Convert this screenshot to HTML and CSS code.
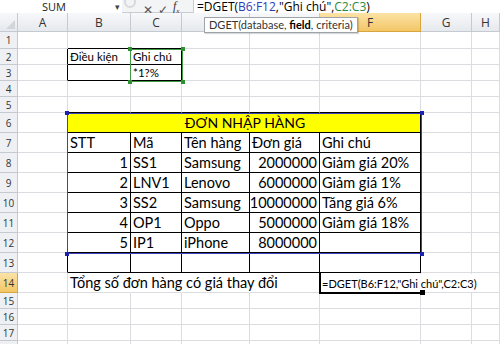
FILE: index.html
```html
<!DOCTYPE html>
<html lang="vi">
<head>
    <meta charset="UTF-8">
    <title>DGET</title>
    <link rel="stylesheet" href="styles.css">
</head>
<body>
    <div class="fbar">
        <div class="namebox">SUM<span class="drop">&#9662;</span></div>
        <div class="ring"></div>
        <div class="btns">
            <span class="btn">&#10005;</span>
            <span class="btn">&#10003;</span>
            <span class="fx">f<sub>x</sub></span>
        </div>
        <div class="formula">=DGET(<span class="blue">B6:F12</span>,"Ghi chú",<span class="green">C2:C3</span>)</div>
    </div>

    <div class="sheet">
        <div class="row hdr">
            <div class="corner"></div>
            <div class="ch">A</div><div class="ch">B</div><div class="ch">C</div><div class="ch"></div>
            <div class="ch"></div><div class="ch on">F</div><div class="ch">G</div><div class="ch">H</div>
        </div>
        <div class="row r1">
            <div class="rh">1</div>
            <div class="c"></div><div class="c tb"></div><div class="c tb"></div><div class="c"></div>
            <div class="c"></div><div class="c"></div><div class="c"></div><div class="c"></div>
        </div>
        <div class="row r2 small">
            <div class="rh">2</div>
            <div class="c tr"></div><div class="c t">Điều kiện</div><div class="c t">Ghi chú</div><div class="c"></div>
            <div class="c"></div><div class="c"></div><div class="c"></div><div class="c"></div>
        </div>
        <div class="row r2 small">
            <div class="rh">3</div>
            <div class="c tr"></div><div class="c t"></div><div class="c t">*1?%</div><div class="c"></div>
            <div class="c"></div><div class="c"></div><div class="c"></div><div class="c"></div>
        </div>
        <div class="row r2">
            <div class="rh">4</div>
            <div class="c"></div><div class="c"></div><div class="c"></div><div class="c"></div>
            <div class="c"></div><div class="c"></div><div class="c"></div><div class="c"></div>
        </div>
        <div class="row r2">
            <div class="rh">5</div>
            <div class="c"></div><div class="c tb"></div><div class="c tb"></div><div class="c tb"></div>
            <div class="c tb"></div><div class="c tb"></div><div class="c"></div><div class="c"></div>
        </div>
        <div class="row r6">
            <div class="rh">6</div>
            <div class="c tr"></div>
            <div class="c t title">ĐƠN NHẬP HÀNG</div>
            <div class="c"></div><div class="c"></div>
        </div>
        <div class="row r6">
            <div class="rh">7</div>
            <div class="c tr"></div><div class="c t">STT</div><div class="c t">Mã</div><div class="c t">Tên hàng</div>
            <div class="c t">Đơn giá</div><div class="c t">Ghi chú</div><div class="c"></div><div class="c"></div>
        </div>
        <div class="row r6">
            <div class="rh">8</div>
            <div class="c tr"></div><div class="c t num">1</div><div class="c t">SS1</div><div class="c t">Samsung</div>
            <div class="c t num">2000000</div><div class="c t">Giảm giá 20%</div><div class="c"></div><div class="c"></div>
        </div>
        <div class="row r6">
            <div class="rh">9</div>
            <div class="c tr"></div><div class="c t num">2</div><div class="c t">LNV1</div><div class="c t">Lenovo</div>
            <div class="c t num">6000000</div><div class="c t">Giảm giá 1%</div><div class="c"></div><div class="c"></div>
        </div>
        <div class="row r6">
            <div class="rh">10</div>
            <div class="c tr"></div><div class="c t num">3</div><div class="c t">SS2</div><div class="c t">Samsung</div>
            <div class="c t num">10000000</div><div class="c t">Tăng giá 6%</div><div class="c"></div><div class="c"></div>
        </div>
        <div class="row r6">
            <div class="rh">11</div>
            <div class="c tr"></div><div class="c t num">4</div><div class="c t">OP1</div><div class="c t">Oppo</div>
            <div class="c t num">5000000</div><div class="c t">Giảm giá 18%</div><div class="c"></div><div class="c"></div>
        </div>
        <div class="row r6">
            <div class="rh">12</div>
            <div class="c tr"></div><div class="c t num">5</div><div class="c t">IP1</div><div class="c t">iPhone</div>
            <div class="c t num">8000000</div><div class="c t"></div><div class="c"></div><div class="c"></div>
        </div>
        <div class="row r6">
            <div class="rh">13</div>
            <div class="c tr"></div><div class="c t"></div><div class="c t"></div><div class="c t"></div>
            <div class="c t"></div><div class="c t"></div><div class="c"></div><div class="c"></div>
        </div>
        <div class="row r6">
            <div class="rh on">14</div>
            <div class="c"></div><div class="c over">Tổng số đơn hàng có giá thay đổi</div><div class="c"></div><div class="c"></div>
            <div class="c"></div><div class="c"></div><div class="c"></div><div class="c"></div>
        </div>
        <div class="row r2">
            <div class="rh">15</div>
            <div class="c"></div><div class="c"></div><div class="c"></div><div class="c"></div>
            <div class="c"></div><div class="c"></div><div class="c"></div><div class="c"></div>
        </div>
        <div class="row r2">
            <div class="rh">16</div>
            <div class="c"></div><div class="c"></div><div class="c"></div><div class="c"></div>
            <div class="c"></div><div class="c"></div><div class="c"></div><div class="c"></div>
        </div>
        <div class="row r2">
            <div class="rh">17</div>
            <div class="c"></div><div class="c"></div><div class="c"></div><div class="c"></div>
            <div class="c"></div><div class="c"></div><div class="c"></div><div class="c"></div>
        </div>
        <div class="row r2">
            <div class="rh">18</div>
            <div class="c"></div><div class="c"></div><div class="c"></div><div class="c"></div>
            <div class="c"></div><div class="c"></div><div class="c"></div><div class="c"></div>
        </div>

        <!-- formula range highlights -->
        <div class="range green-range">
            <i class="h tl"></i><i class="h trr"></i><i class="h bl"></i><i class="h br"></i>
        </div>
        <div class="range blue-range">
            <i class="h tl"></i><i class="h trr"></i><i class="h bl"></i><i class="h br"></i>
        </div>

        <!-- in-cell editing F14 -->
        <div class="edit">=DGET(B6:F12,"Ghi chú",C2:C3)</div>
        <div class="active"><i class="h br"></i></div>

        <div class="tip">DGET(database, <b>field</b>, criteria)</div>
    </div>
</body>
</html>
```

FILE: styles.css
```css
body {
    margin: 0;
    width: 500px;
    height: 344px;
    overflow: hidden;
    background: #fff;
    font-family: Lato, "Open Sans", sans-serif;
    color: #000;
}

/* formula bar */
.fbar {
    height: 13px;
    display: flex;
    align-items: flex-start;
    background: #f3f4f6;
    font-family: "Open Sans", "Noto Sans", sans-serif;
    font-size: 12px;
    line-height: 13px;
    box-shadow: inset 0 -1px 0 #c9ccd1;
}

.namebox {
    width: 122px;
    background: #fff;
    position: relative;
    text-align: center;
    padding-right: 14px;
    box-sizing: border-box;
    color: #222;
    font-size: 11px;
}

.drop {
    position: absolute;
    right: 2px;
    top: 0;
    font-size: 9px;
    color: #444;
}

.ring {
    width: 12px;
    height: 12px;
    margin-left: 2px;
    border: 2px solid #d6d9dd;
    border-radius: 50%;
    box-sizing: border-box;
    margin-top: -4px;
}

.btns {
    display: flex;
    align-items: center;
    gap: 6px;
    width: 50px;
    padding-left: 7px;
    color: #555;
    font-size: 12px;
}

.btn {
    width: 9px;
    text-align: center;
}

.fx {
    font-family: "Liberation Serif", serif;
    font-style: italic;
    font-size: 12px;
    color: #333;
}

.fx sub {
    font-size: 7px;
}

.formula {
    flex: 1;
    background: #fff;
    border-left: 1px solid #c9ccd1;
    padding-left: 3px;
    white-space: nowrap;
    font-size: 12px;
}

.blue {
    color: #2d3bb8;
}

.green {
    color: #2a8a3a;
}

/* sheet */
.sheet {
    position: relative;
}

.row {
    display: grid;
    grid-template-columns: 18px 50px 63px 51px 68px 70px 101px 51px 28px;
}

.hdr { height: 19px; }
.r1 { height: 17px; }
.r2 { height: 16px; }
.r6 { height: 20px; }

.corner,
.ch,
.rh {
    background: linear-gradient(#f7f8fa, #e6e9ed);
    border-right: 1px solid #c5cad1;
    border-bottom: 1px solid #c5cad1;
    box-sizing: border-box;
    color: #333;
    display: flex;
    align-items: center;
    justify-content: center;
}

.corner {
    position: relative;
}

.corner::after {
    content: "";
    position: absolute;
    right: 2px;
    bottom: 2px;
    border-left: 9px solid transparent;
    border-bottom: 9px solid #d2d6db;
}

.ch {
    font-family: "Open Sans", sans-serif;
    font-size: 12px;
}

.rh {
    font-family: "Open Sans", sans-serif;
    font-size: 10px;
    background: #eef0f3;
}

.ch.on,
.rh.on {
    background: linear-gradient(#fbe3a6, #f3c666);
    border-color: #d9a63e;
}

.c {
    border-right: 1px solid #dadcdf;
    border-bottom: 1px solid #dadcdf;
    box-sizing: border-box;
    font-size: 14.5px;
    line-height: 18px;
    padding-left: 2px;
    white-space: nowrap;
    display: flex;
    align-items: flex-end;
    overflow: visible;
}

.small .c {
    font-size: 11.5px;
    line-height: 14px;
}

.c.t {
    border-right-color: #000;
    border-bottom-color: #000;
}

.c.tr {
    border-right-color: #000;
}

.c.tb {
    border-bottom-color: #000;
}

.c.num {
    justify-content: flex-end;
    padding: 0 2px 0 0;
}

.c.title {
    grid-column: span 5;
    background: #ffff00;
    justify-content: center;
    font-size: 14px;
}

.c.over {
    border-right-color: transparent;
    position: relative;
    z-index: 1;
}

.c.over + .c,
.c.over + .c + .c {
    border-right-color: transparent;
}

/* highlighted ranges */
.range {
    position: absolute;
    box-sizing: border-box;
}

.green-range {
    left: 130px;
    top: 36px;
    width: 53px;
    height: 33px;
    border: 1px solid #3e9b44;
}

.blue-range {
    left: 67px;
    top: 100px;
    width: 355px;
    height: 141px;
    border: 1px solid #3a42c0;
}

.h {
    position: absolute;
    width: 4px;
    height: 4px;
}

.green-range .h { background: #2f8f33; }
.blue-range .h { background: #1c22b0; }

.tl { left: -3px; top: -3px; }
.trr { right: -3px; top: -3px; }
.bl { left: -3px; bottom: -3px; }
.br { right: -3px; bottom: -3px; }

.edit {
    position: absolute;
    left: 321px;
    top: 261px;
    height: 18px;
    padding: 0 2px 0 1px;
    background: #fff;
    font-family: Lato, "Open Sans", sans-serif;
    font-size: 11px;
    line-height: 20px;
    white-space: nowrap;
    z-index: 2;
}

.active {
    position: absolute;
    left: 319px;
    top: 259px;
    width: 103px;
    height: 22px;
    border-left: 2px solid #000;
    border-bottom: 2px solid #000;
    box-sizing: border-box;
    z-index: 3;
}

.active .h {
    background: #000;
    width: 5px;
    height: 5px;
}

.tip {
    position: absolute;
    left: 204px;
    top: 4px;
    height: 14px;
    padding: 0 4px;
    background: #fff;
    border: 1px solid #9ea3aa;
    box-shadow: 1px 1px 1px rgba(0, 0, 0, 0.15);
    font-family: Lato, "Open Sans", sans-serif;
    font-size: 11px;
    line-height: 13px;
    color: #333;
    white-space: nowrap;
}

.tip b {
    color: #000;
}
```
